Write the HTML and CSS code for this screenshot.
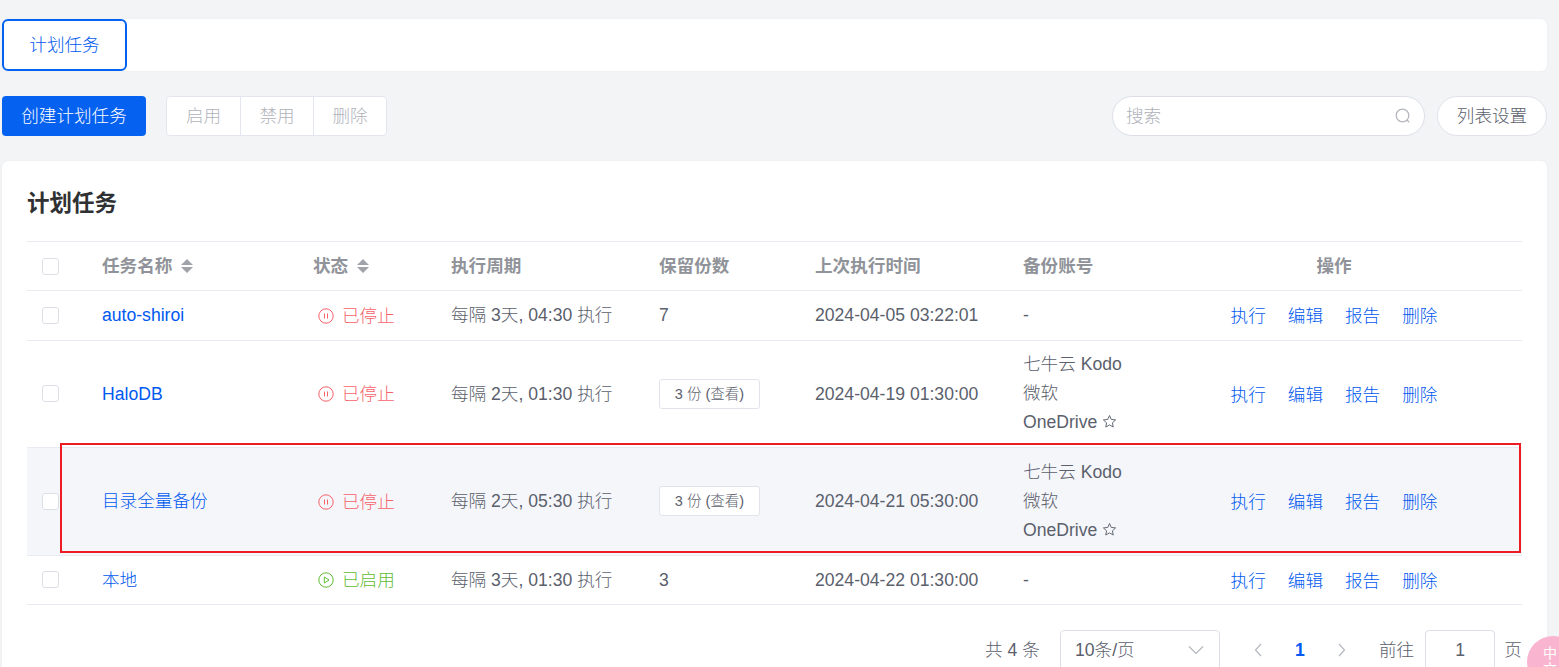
FILE: index.html
```html
<!DOCTYPE html>
<html lang="zh-CN">
<head>
<meta charset="utf-8">
<title>计划任务</title>
<link rel="stylesheet" href="styles.css">
</head>
<body>
<main class="page">
  <nav class="tabs"><a class="tab">计划任务</a></nav>
  <div class="toolbar">
    <button class="btn-primary">创建计划任务</button>
    <div class="btn-group">
      <button class="btn-g w1">启用</button><button class="btn-g w2">禁用</button><button class="btn-g w3">删除</button>
    </div>
    <div class="spacer"></div>
    <div class="search">
      <span class="search-text">搜索</span>
      <svg class="search-icon" viewBox="0 0 16 16"><circle cx="7.5" cy="7.5" r="6.3"/><path d="M12 12l2.2 2.2"/></svg>
    </div>
    <button class="btn-round">列表设置</button>
  </div>
  <section class="card">
    <h1 class="title">计划任务</h1>
    <table class="table">
      <colgroup>
        <col class="c1"><col class="c2"><col class="c3"><col class="c4"><col class="c5"><col class="c6"><col class="c7"><col class="c8">
      </colgroup>
      <thead>
        <tr>
          <th><span class="check"></span></th>
          <th>任务名称<svg class="sort" viewBox="0 0 12 14"><path d="M6 0l6 6H0zM0 8h12l-6 6z"/></svg></th>
          <th>状态<svg class="sort" viewBox="0 0 12 14"><path d="M6 0l6 6H0zM0 8h12l-6 6z"/></svg></th>
          <th>执行周期</th>
          <th>保留份数</th>
          <th>上次执行时间</th>
          <th>备份账号</th>
          <th class="center">操作</th>
        </tr>
      </thead>
      <tbody>
        <tr class="short">
          <td><span class="check"></span></td>
          <td><a class="link">auto-shiroi</a></td>
          <td><span class="status stopped"><svg class="st-icon" viewBox="0 0 16 16"><circle cx="8" cy="8" r="7.2"/><path d="M6.500 5.500v5M9.500 5.500v5"/></svg>已停止</span></td>
          <td>每隔 3天, 04:30 执行</td>
          <td>7</td>
          <td>2024-04-05 03:22:01</td>
          <td>-</td>
          <td><div class="ops"><a>执行</a><a>编辑</a><a>报告</a><a>删除</a></div></td>
        </tr>
        <tr>
          <td><span class="check"></span></td>
          <td><a class="link">HaloDB</a></td>
          <td><span class="status stopped"><svg class="st-icon" viewBox="0 0 16 16"><circle cx="8" cy="8" r="7.2"/><path d="M6.500 5.500v5M9.500 5.500v5"/></svg>已停止</span></td>
          <td>每隔 2天, 01:30 执行</td>
          <td><span class="tag">3 份 (查看)</span></td>
          <td>2024-04-19 01:30:00</td>
          <td class="accounts"><div>七牛云 Kodo</div><div>微软</div><div>OneDrive <svg class="star" viewBox="0 0 16 16"><path d="M8 1.600l1.900 4.200 4.600.5-3.400 3.100.9 4.500-4-2.300-4 2.300.9-4.500L1.500 6.300l4.600-.5z"/></svg></div></td>
          <td><div class="ops"><a>执行</a><a>编辑</a><a>报告</a><a>删除</a></div></td>
        </tr>
        <tr class="hover">
          <td><span class="check"></span></td>
          <td><a class="link">目录全量备份</a></td>
          <td><span class="status stopped"><svg class="st-icon" viewBox="0 0 16 16"><circle cx="8" cy="8" r="7.2"/><path d="M6.500 5.500v5M9.500 5.500v5"/></svg>已停止</span></td>
          <td>每隔 2天, 05:30 执行</td>
          <td><span class="tag">3 份 (查看)</span></td>
          <td>2024-04-21 05:30:00</td>
          <td class="accounts"><div>七牛云 Kodo</div><div>微软</div><div>OneDrive <svg class="star" viewBox="0 0 16 16"><path d="M8 1.600l1.900 4.200 4.600.5-3.400 3.100.9 4.500-4-2.300-4 2.300.9-4.500L1.500 6.300l4.600-.5z"/></svg></div></td>
          <td><div class="ops"><a>执行</a><a>编辑</a><a>报告</a><a>删除</a></div></td>
        </tr>
        <tr class="short">
          <td><span class="check"></span></td>
          <td><a class="link">本地</a></td>
          <td><span class="status running"><svg class="st-icon" viewBox="0 0 16 16"><circle cx="8" cy="8" r="7.2"/><path d="M6.300 5l4.700 3-4.700 3z"/></svg>已启用</span></td>
          <td>每隔 3天, 01:30 执行</td>
          <td>3</td>
          <td>2024-04-22 01:30:00</td>
          <td>-</td>
          <td><div class="ops"><a>执行</a><a>编辑</a><a>报告</a><a>删除</a></div></td>
        </tr>
      </tbody>
    </table>
    <div class="pager">
      <span class="total">共 4 条</span>
      <div class="select"><span>10条/页</span><svg class="chev" viewBox="0 0 16 10"><path d="M1 1.500l7 7 7-7"/></svg></div>
      <svg class="arrow prev" viewBox="0 0 8 14"><path d="M7 1L1.500 7 7 13"/></svg>
      <span class="page-num">1</span>
      <svg class="arrow next" viewBox="0 0 8 14"><path d="M1 1l5.500 6L1 13"/></svg>
      <span class="goto">前往</span>
      <div class="page-input">1</div>
      <span class="goto-end">页</span>
    </div>
  </section>
</main>
<div class="red-box"></div>
<div class="float-badge">中<br>文A</div>
</body>
</html>
```

FILE: styles.css
```css
* { box-sizing: border-box; }
html, body { margin: 0; height: 667px; overflow: hidden; }
body {
  background: #f3f4f5;
  font-family: "Liberation Sans", "Noto Sans CJK SC", sans-serif;
  font-size: 17.6px;
  font-weight: 300;
  line-height: 24px;
  color: #5a606c;
}
.page { padding: 19px 12px 0 2px; }
button { font: inherit; cursor: pointer; margin: 0; }

.tabs {
  height: 52px;
  background: #fff;
  border-radius: 6px;
  box-shadow: 0 0 2px #e2e6f0;
}
.tab {
  display: flex;
  align-items: center;
  justify-content: center;
  width: 125px;
  height: 52px;
  border: 2px solid #0561ef;
  border-radius: 6px;
  color: #0059f0;
}

.toolbar { display: flex; align-items: center; margin-top: 25px; height: 40px; }
.btn-primary {
  width: 144px;
  height: 40px;
  background: #0561ef;
  color: #fff;
  border: 0;
  border-radius: 4px;
}
.btn-group {
  display: flex;
  height: 40px;
  margin-left: 20px;
  background: #fff;
  border: 1px solid #e3e6ef;
  border-radius: 4px;
}
.btn-g { height: 38px; background: none; border: 0; border-left: 1px solid #e3e6ef; color: #b0b3ba; padding: 0; }
.btn-g.w1 { width: 73px; border-left: 0; }
.btn-g.w2 { width: 73px; }
.btn-g.w3 { width: 73px; }
.spacer { flex: 1; }
.search {
  display: flex;
  align-items: center;
  justify-content: space-between;
  width: 313px;
  height: 40px;
  padding: 0 13px;
  background: #fff;
  border: 1px solid #dcdfe8;
  border-radius: 20px;
  color: #aeb1b9;
}
.search-icon { width: 16px; height: 16px; fill: none; stroke: #b4b7bf; stroke-width: 1.300; }
.btn-round {
  width: 110px;
  height: 40px;
  margin-left: 12px;
  background: #fff;
  border: 1px solid #dfe2ea;
  border-radius: 20px;
  color: #5a606c;
  padding: 0;
}

.card {
  height: 560px;
  margin-top: 25px;
  padding: 26px 25px 0;
  background: #fff;
  border-radius: 6px;
  box-shadow: 0 0 2px #e2e6f0;
}
.title { margin: 0 0 21px; font-size: 22.5px; line-height: 33px; font-weight: 700; color: #303133; }

.table { width: 1495px; border-collapse: collapse; table-layout: fixed; }
.c1 { width: 75px; } .c2 { width: 211px; } .c3 { width: 138px; } .c4 { width: 208px; }
.c5 { width: 156px; } .c6 { width: 208px; } .c7 { width: 123px; } .c8 { width: 376px; }
th, td { padding: 0; text-align: left; vertical-align: middle; white-space: nowrap; border-bottom: 1px solid #e9ebf2; }
thead tr { height: 49px; border-top: 1px solid #e9ebf2; }
th { font-weight: 700; color: #909399; }
th.center { text-align: center; }
tbody tr { height: 107.500px; }
tbody tr.short { height: 49.500px; }
tbody tr.hover td { background: #f5f6fa; }
.check {
  display: block;
  width: 17px;
  height: 17px;
  margin-left: 15px;
  background: #fff;
  border: 1px solid #dcdfe6;
  border-radius: 3px;
}
.sort { width: 12px; height: 14px; margin-left: 9px; fill: #a0a3aa; vertical-align: -1px; }
.link { color: #0059f0; }
.status { display: inline-flex; align-items: center; margin-left: 5px; padding-top: 3px; }
.st-icon { width: 16px; height: 16px; margin-right: 8px; fill: none; stroke: currentColor; stroke-width: 1; }
.stopped { color: #f7626a; }
.running { color: #5fbc32; }
.tag {
  display: inline-block;
  width: 101px;
  height: 30px;
  background: #fff;
  border: 1px solid #e0e3ea;
  border-radius: 3px;
  font-size: 14.500px;
  line-height: 28px;
  text-align: center;
}
.accounts div { line-height: 29px; }
.star { width: 15px; height: 15px; vertical-align: -1px; fill: none; stroke: #5a606c; stroke-width: 1; }
.ops { display: flex; justify-content: center; gap: 22px; padding-top: 2px; color: #0059f0; }

.pager { display: flex; align-items: center; height: 40px; margin-top: 25px; padding-left: 958px; }
.total { width: 75px; flex: none; }
.select {
  display: flex;
  align-items: center;
  justify-content: space-between;
  flex: none;
  width: 160px;
  height: 40px;
  padding: 0 15px 0 14px;
  border: 1px solid #dcdfe6;
  border-radius: 4px;
}
.chev { width: 16px; height: 10px; fill: none; stroke: #b4b7bf; stroke-width: 1.200; }
.arrow { width: 8px; height: 14px; flex: none; fill: none; stroke: #b4b7bf; stroke-width: 1.200; }
.prev { margin-left: 34px; }
.page-num { width: 76px; flex: none; text-align: center; font-weight: 700; color: #0559f0; }
.goto { margin-left: 33px; flex: none; }
.page-input {
  flex: none;
  width: 70px;
  height: 40px;
  margin-left: 11px;
  border: 1px solid #dcdfe6;
  border-radius: 4px;
  line-height: 38px;
  text-align: center;
}
.goto-end { margin-left: 9px; flex: none; }

.red-box {
  position: absolute;
  left: 60px;
  top: 443px;
  width: 1461px;
  height: 110px;
  border: 2px solid #ed1c24;
}
.float-badge {
  position: absolute;
  left: 1527px;
  top: 636px;
  width: 52px;
  height: 52px;
  padding: 9px 0 0 16px;
  border-radius: 50%;
  background: #f9b4cf;
  color: #fff;
  font-size: 14px;
  line-height: 16px;
  font-weight: 400;
}
```
